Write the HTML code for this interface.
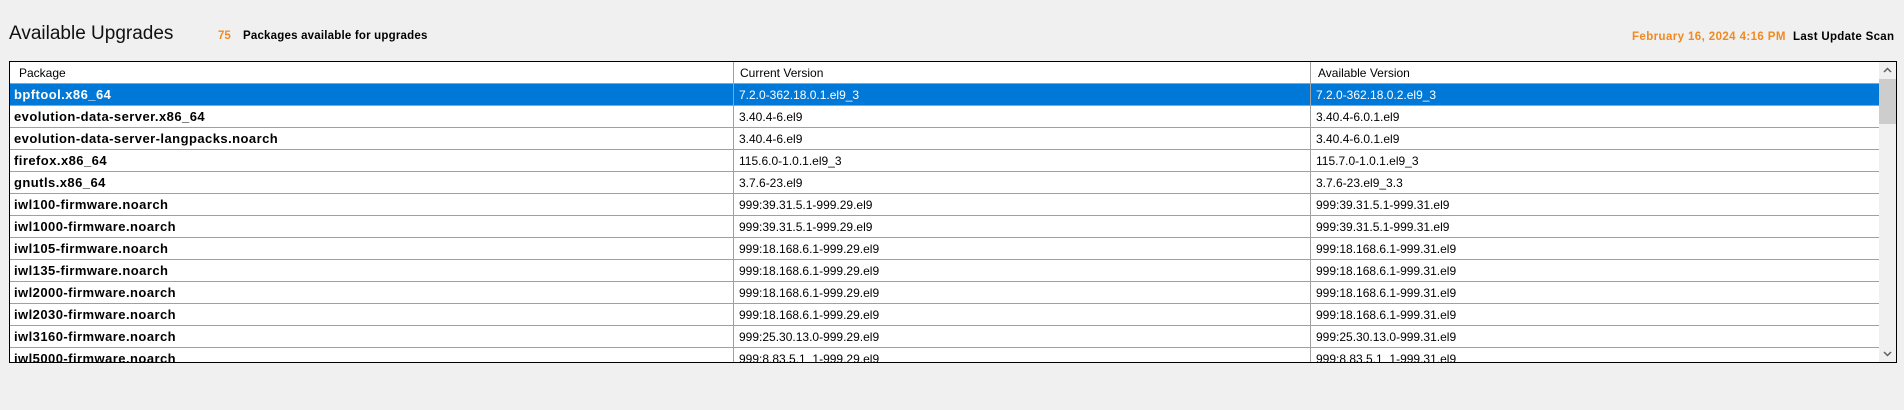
<!DOCTYPE html><html><head><style>
body{margin:0;width:1904px;height:410px;background:#f0f0f0;font-family:"Liberation Sans",sans-serif;position:relative;overflow:hidden}
.a{position:absolute;white-space:nowrap}
#box{position:absolute;left:9px;top:61px;width:1886px;height:300px;border:1px solid #000;background:#fff;overflow:hidden}
.r{position:absolute;left:0;width:1869px;height:21px;border-bottom:1px solid #a0a0a0;font-size:12px}
.r div{position:absolute;top:0;height:21px;line-height:22px}
.c1{left:0;width:722px;padding-left:4px;font-weight:bold;font-size:13px;letter-spacing:0.45px}
.c2{left:723px;width:576px;padding-left:5px;border-left:1px solid #a0a0a0}
.c3{left:1300px;width:569px;padding-left:5px;border-left:1px solid #a0a0a0}
.sel{background:#0078d7;color:#fff}
</style></head><body>
<div class="a" style="left:9px;top:23px;font-size:19px;color:#111">Available Upgrades</div>
<div class="a" style="left:218px;top:30px;font-size:11.5px;color:#f08a20;font-weight:bold">75</div>
<div class="a" style="left:243px;top:30px;font-size:11.5px;font-weight:bold;letter-spacing:0.2px">Packages available for upgrades</div>
<div class="a" style="left:1632px;top:31px;font-size:11.5px;color:#f08a20;font-weight:bold;letter-spacing:0.4px">February 16, 2024 4:16 PM</div>
<div class="a" style="left:1793px;top:31px;font-size:11.5px;font-weight:bold;letter-spacing:0.3px">Last Update Scan</div>
<div id="box">
<div class="r" style="top:0;font-size:12px"><div class="c1" style="font-weight:normal;font-size:12px;padding-left:9px;letter-spacing:0">Package</div><div class="c2" style="padding-left:6px">Current Version</div><div class="c3" style="padding-left:7px">Available Version</div></div>
<div class="r sel" style="top:22px"><div class="c1">bpftool.x86_64</div><div class="c2">7.2.0-362.18.0.1.el9_3</div><div class="c3">7.2.0-362.18.0.2.el9_3</div></div>
<div class="r" style="top:44px"><div class="c1">evolution-data-server.x86_64</div><div class="c2">3.40.4-6.el9</div><div class="c3">3.40.4-6.0.1.el9</div></div>
<div class="r" style="top:66px"><div class="c1">evolution-data-server-langpacks.noarch</div><div class="c2">3.40.4-6.el9</div><div class="c3">3.40.4-6.0.1.el9</div></div>
<div class="r" style="top:88px"><div class="c1">firefox.x86_64</div><div class="c2">115.6.0-1.0.1.el9_3</div><div class="c3">115.7.0-1.0.1.el9_3</div></div>
<div class="r" style="top:110px"><div class="c1">gnutls.x86_64</div><div class="c2">3.7.6-23.el9</div><div class="c3">3.7.6-23.el9_3.3</div></div>
<div class="r" style="top:132px"><div class="c1">iwl100-firmware.noarch</div><div class="c2">999:39.31.5.1-999.29.el9</div><div class="c3">999:39.31.5.1-999.31.el9</div></div>
<div class="r" style="top:154px"><div class="c1">iwl1000-firmware.noarch</div><div class="c2">999:39.31.5.1-999.29.el9</div><div class="c3">999:39.31.5.1-999.31.el9</div></div>
<div class="r" style="top:176px"><div class="c1">iwl105-firmware.noarch</div><div class="c2">999:18.168.6.1-999.29.el9</div><div class="c3">999:18.168.6.1-999.31.el9</div></div>
<div class="r" style="top:198px"><div class="c1">iwl135-firmware.noarch</div><div class="c2">999:18.168.6.1-999.29.el9</div><div class="c3">999:18.168.6.1-999.31.el9</div></div>
<div class="r" style="top:220px"><div class="c1">iwl2000-firmware.noarch</div><div class="c2">999:18.168.6.1-999.29.el9</div><div class="c3">999:18.168.6.1-999.31.el9</div></div>
<div class="r" style="top:242px"><div class="c1">iwl2030-firmware.noarch</div><div class="c2">999:18.168.6.1-999.29.el9</div><div class="c3">999:18.168.6.1-999.31.el9</div></div>
<div class="r" style="top:264px"><div class="c1">iwl3160-firmware.noarch</div><div class="c2">999:25.30.13.0-999.29.el9</div><div class="c3">999:25.30.13.0-999.31.el9</div></div>
<div class="r" style="top:286px"><div class="c1">iwl5000-firmware.noarch</div><div class="c2">999:8.83.5.1_1-999.29.el9</div><div class="c3">999:8.83.5.1_1-999.31.el9</div></div>
<div style="position:absolute;left:1869px;top:0;width:17px;height:300px;background:#f0f0f0">
<div style="position:absolute;left:0;top:17px;width:17px;height:45px;background:#cdcdcd"></div>
<svg style="position:absolute;left:4px;top:5px" width="9" height="6"><path d="M1 5L4.5 1.5L8 5" stroke="#606060" stroke-width="1.5" fill="none"/></svg>
<svg style="position:absolute;left:4px;top:289px" width="9" height="6"><path d="M1 1L4.5 4.5L8 1" stroke="#606060" stroke-width="1.5" fill="none"/></svg>
</div>
</div>
</body></html>
